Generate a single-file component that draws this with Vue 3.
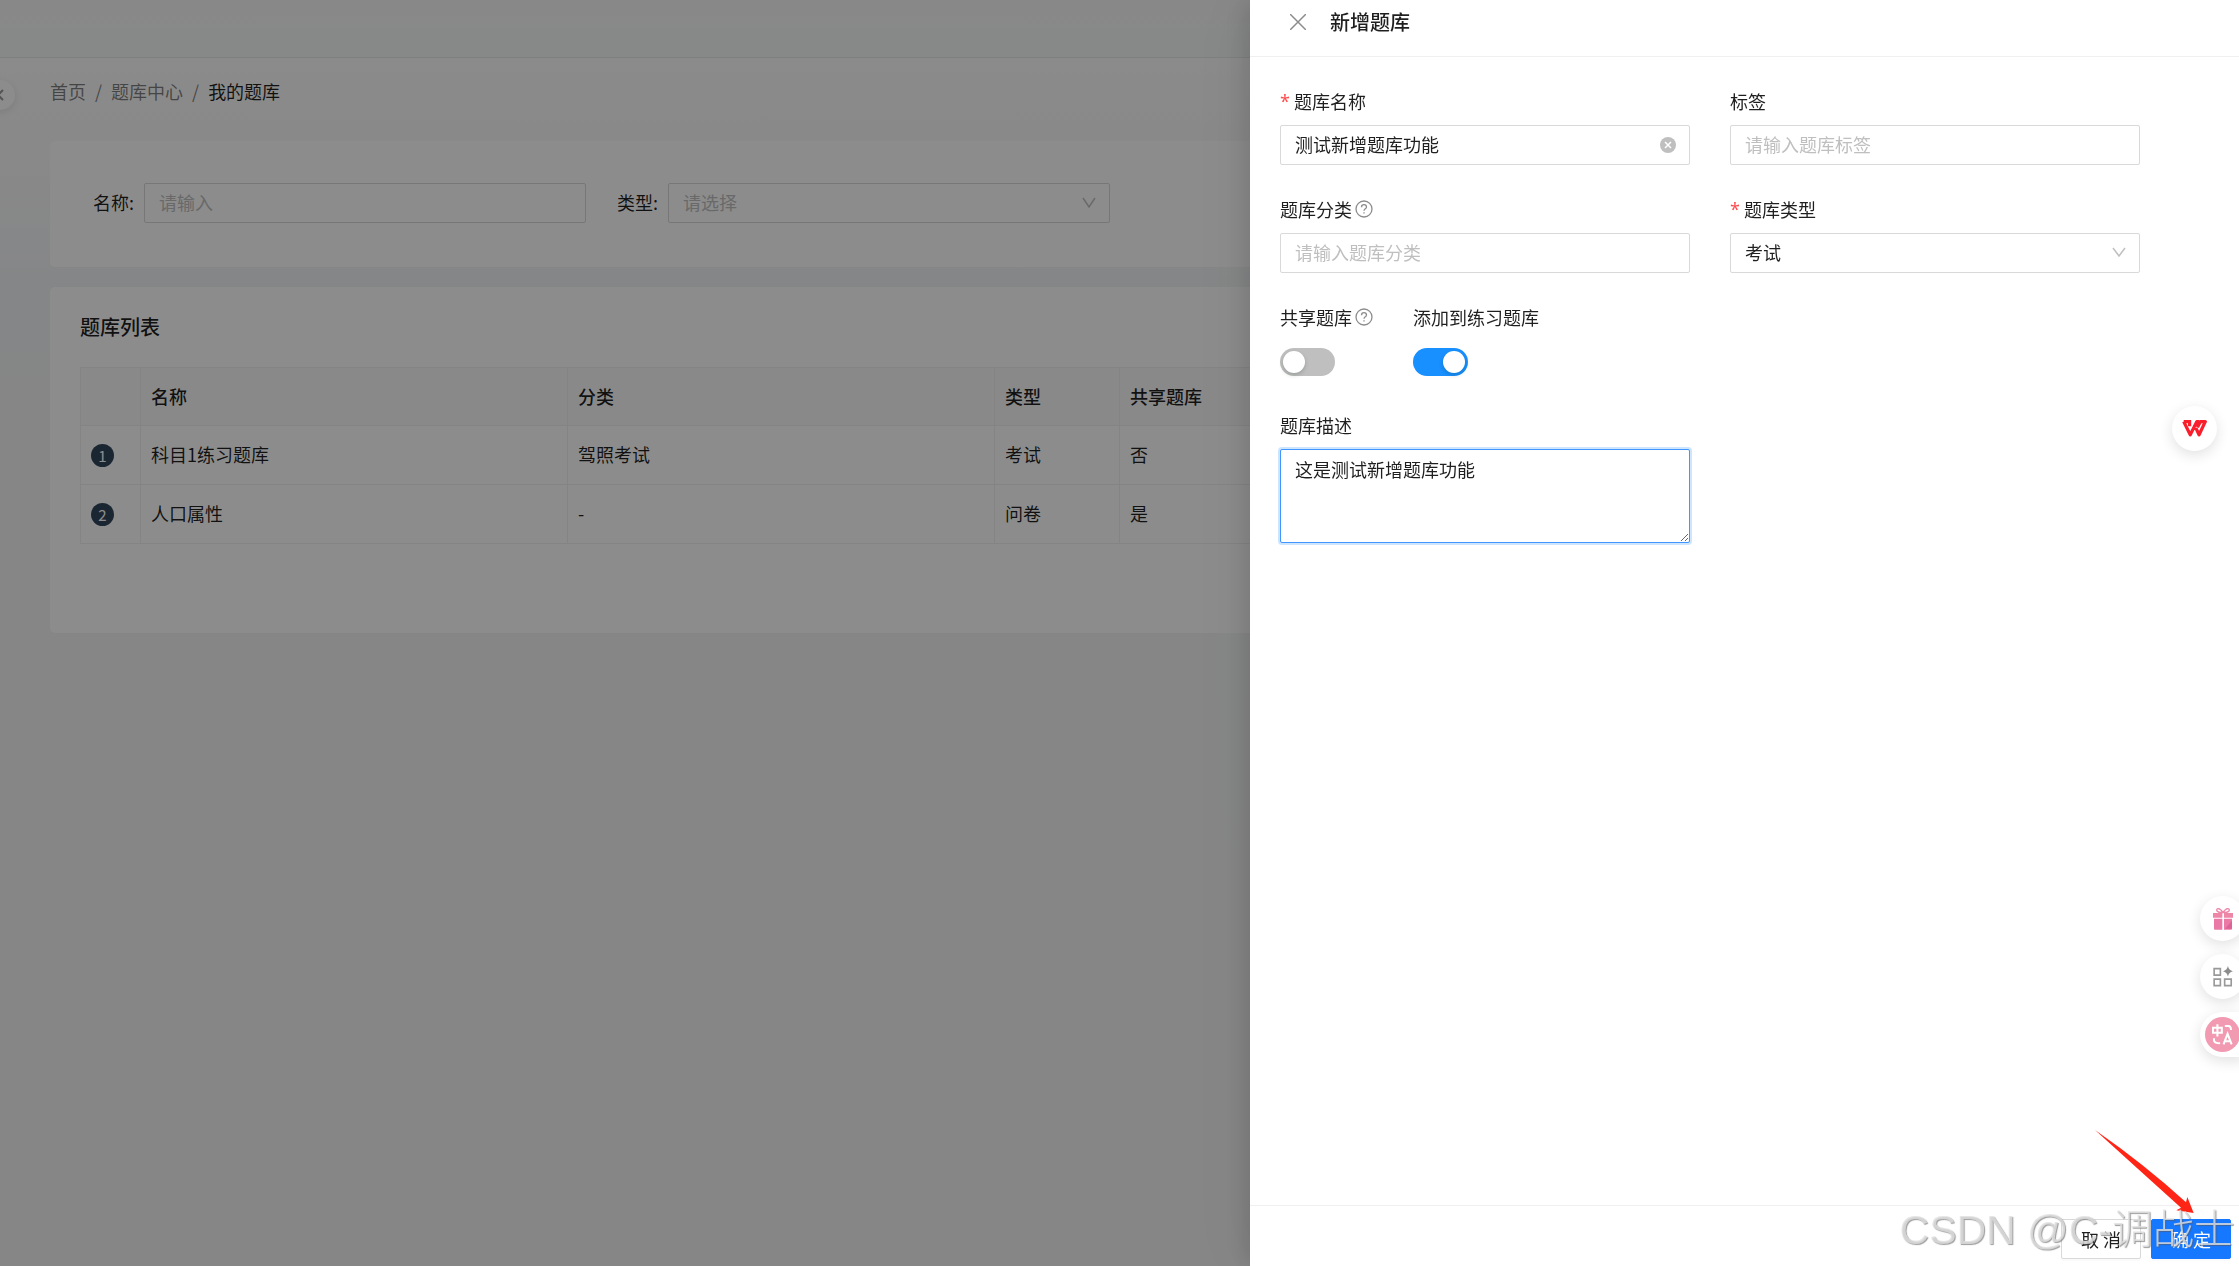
<script setup>
import { ref } from 'vue'

const filterName = ref('')
const filterType = ref('')
const bankName = ref('测试新增题库功能')
const bankTag = ref('')
const bankCategory = ref('')
const bankType = ref('exam')
const shared = ref(false)
const practice = ref(true)
const description = ref('这是测试新增题库功能')

const rows = [
  { id: 1, name: '科目1练习题库', category: '驾照考试', type: '考试', shared: '否' },
  { id: 2, name: '人口属性', category: '-', type: '问卷', shared: '是' },
]
</script>

<template>
  <div class="app">
    <header class="topbar"></header>
    <button class="collapse" type="button" aria-label="收起">
      <svg viewBox="0 0 10 14" width="10" height="14"><path d="M8 2 3 7l5 5" /></svg>
    </button>

    <main class="page">
      <nav class="crumbs" aria-label="breadcrumb">
        <a href="#">首页</a><span class="sep">/</span>
        <a href="#">题库中心</a><span class="sep">/</span>
        <span class="current">我的题库</span>
      </nav>

      <form class="card filters" @submit.prevent>
        <div class="filter">
          <label for="f-name">名称:</label>
          <input id="f-name" v-model="filterName" class="control" type="text" placeholder="请输入" />
        </div>
        <div class="filter">
          <label for="f-type">类型:</label>
          <div class="select-wrap">
            <select id="f-type" v-model="filterType" class="control" :class="{ empty: !filterType }">
              <option value="">请选择</option>
              <option value="exam">考试</option>
              <option value="survey">问卷</option>
            </select>
            <svg class="caret" viewBox="0 0 14 14" width="14" height="14"><path d="M1 2l6 9 6-9" /></svg>
          </div>
        </div>
      </form>

      <section class="card list">
        <h2>题库列表</h2>
        <table>
          <colgroup>
            <col class="c-index" /><col class="c-wide" /><col class="c-wide" /><col class="c-type" /><col />
          </colgroup>
          <thead>
            <tr><th></th><th>名称</th><th>分类</th><th>类型</th><th>共享题库</th></tr>
          </thead>
          <tbody>
            <tr v-for="row in rows" :key="row.id">
              <td><span class="index">{{ row.id }}</span></td>
              <td>{{ row.name }}</td>
              <td>{{ row.category }}</td>
              <td>{{ row.type }}</td>
              <td>{{ row.shared }}</td>
            </tr>
          </tbody>
        </table>
      </section>
    </main>

    <div class="mask"></div>

    <aside class="drawer" role="dialog" aria-labelledby="drawer-title">
      <header class="drawer-head">
        <button class="close" type="button" aria-label="关闭">
          <svg viewBox="0 0 16 16" width="16" height="16"><path d="M0 0l16 16M16 0 0 16" /></svg>
        </button>
        <h1 id="drawer-title">新增题库</h1>
      </header>

      <form class="drawer-body" @submit.prevent>
        <div class="form-row">
          <div class="field">
            <label for="b-name"><span class="star">*</span>题库名称</label>
            <div class="select-wrap">
              <input id="b-name" v-model="bankName" class="control" type="text" />
              <button class="clear" type="button" aria-label="清除" @click="bankName = ''">
                <svg viewBox="0 0 16 16" width="16" height="16">
                  <circle cx="8" cy="8" r="8" />
                  <path d="M5 5l6 6M11 5l-6 6" />
                </svg>
              </button>
            </div>
          </div>
          <div class="field">
            <label for="b-tag">标签</label>
            <input id="b-tag" v-model="bankTag" class="control" type="text" placeholder="请输入题库标签" />
          </div>
        </div>

        <div class="form-row">
          <div class="field">
            <label for="b-cat">题库分类
              <svg class="help" viewBox="0 0 18 18" width="18" height="18">
                <circle cx="9" cy="9" r="8" />
                <path d="M6.5 7.2c0-3.4 5-3.2 5-.2 0 1.900-2.500 1.800-2.500 3.800M9 12.200v1.400" />
              </svg>
            </label>
            <input id="b-cat" v-model="bankCategory" class="control" type="text" placeholder="请输入题库分类" />
          </div>
          <div class="field">
            <label for="b-type"><span class="star">*</span>题库类型</label>
            <div class="select-wrap">
              <select id="b-type" v-model="bankType" class="control">
                <option value="exam">考试</option>
                <option value="survey">问卷</option>
              </select>
              <svg class="caret" viewBox="0 0 14 14" width="14" height="14"><path d="M1 2l6 8 6-8" /></svg>
            </div>
          </div>
        </div>

        <div class="form-row">
          <div class="field auto">
            <label for="b-share">共享题库
              <svg class="help" viewBox="0 0 18 18" width="18" height="18">
                <circle cx="9" cy="9" r="8" />
                <path d="M6.5 7.2c0-3.4 5-3.2 5-.2 0 1.900-2.500 1.800-2.500 3.800M9 12.200v1.400" />
              </svg>
            </label>
            <div class="switch-row"><input id="b-share" v-model="shared" class="switch" type="checkbox" role="switch" /></div>
          </div>
          <div class="field auto">
            <label for="b-practice">添加到练习题库</label>
            <div class="switch-row"><input id="b-practice" v-model="practice" class="switch" type="checkbox" role="switch" /></div>
          </div>
        </div>

        <div class="form-row">
          <div class="field">
            <label for="b-desc">题库描述</label>
            <textarea id="b-desc" v-model="description" class="control area"></textarea>
          </div>
        </div>
      </form>

      <footer class="drawer-foot">
        <button class="btn" type="button">取 消</button>
        <button class="btn primary" type="button">确 定</button>
      </footer>

      <svg class="arrow" viewBox="0 0 300 252" width="100" height="84">
        <path d="M0 0Q150 104 273 217L277 201 296 249 244 241 258 233Q130 118 0 0Z" />
      </svg>
      <div class="watermark">CSDN @C-调战士</div>
    </aside>

    <button class="float wps" type="button" aria-label="WPS">
      <svg viewBox="0 0 76 52" width="25" height="17">
        <path d="M5 5H28M5 5L25 45 45 5H52M42 24L52 45 71 5H56L47 22M28 14H18" fill="none" stroke="#fa1e2d" stroke-width="10" stroke-linejoin="round" />
      </svg>
    </button>

    <div class="dock">
      <button class="float" type="button" aria-label="礼物">
        <svg viewBox="0 0 60 66" width="20" height="22">
          <path d="M3 32H28V65H6Q3 65 3 62ZM33 32H57V62Q57 65 54 65H33Z" fill="#ea7aa5" />
          <path d="M0 15H28V29H0ZM33 15H60V29H33Z" fill="#ee86a8" />
          <path d="M30 14C20-2 8 0 12 9q4 5 18 5C40-2 52 0 48 9q-4 5-18 5" fill="none" stroke="#ee86a8" stroke-width="4" />
          <path d="M36 62 57 38V62Z" fill="#dd6298" />
        </svg>
      </button>
      <button class="float" type="button" aria-label="应用">
        <svg viewBox="0 0 60 64" width="20" height="21">
          <path d="M3 8H22V28H3ZM3 40H22V60H3ZM35 40H55V60H35Z" fill="none" stroke="#999" stroke-width="5" />
          <path d="M45 0q3 13 15 16-12 3-15 16-3-13-15-16 12-3 15-16Z" fill="#8c8c8c" />
        </svg>
      </button>
      <button class="float translate" type="button" aria-label="翻译">
        <span class="disc">
          <svg viewBox="0 0 62 62" width="21" height="21">
            <path d="M3 11H29V26H3ZM16 1V37M38 6H48Q56 6 56 18M6 42V48Q6 57 24 57M34 60L46 29 58 60M38 51H54" fill="none" stroke="#fff" stroke-width="6" />
          </svg>
        </span>
      </button>
    </div>
  </div>
</template>

<style>
body {
  margin: 0;
  overflow: hidden;
}
</style>

<style scoped>
.app {
  position: relative;
  min-height: 100vh;
  overflow: hidden;
  background: linear-gradient(#fdfdfd 60px, #fafafa 130px, #f3f5f6 280px, #f4f5f5 500px, #f5f5f5 100%);
  color: rgba(0, 0, 0, 0.88);
  font: 18px/28px "Noto Sans CJK SC", "Noto Sans", sans-serif;
}
.app *, .app *::before { box-sizing: border-box; }
button, input, select, textarea { font: inherit; color: inherit; margin: 0; }
button { padding: 0; border: 0; background: none; cursor: pointer; }
svg { display: block; }

.topbar {
  height: 58px;
  background: linear-gradient(#f8f8f9, #f5f9f7);
  border-bottom: 1px solid #e4eae7;
}
.collapse {
  position: absolute;
  top: 80px;
  left: -15px;
  width: 30px;
  height: 30px;
  padding-left: 10px;
  border-radius: 50%;
  background: #fff;
  box-shadow: 0 2px 8px rgba(0, 0, 0, 0.1);
}
.collapse path { fill: none; stroke: #999; stroke-width: 2; }

.page { padding: 19px 50px 0; }
.crumbs { display: flex; height: 28px; color: rgba(0, 0, 0, 0.5); }
.crumbs a { color: inherit; text-decoration: none; }
.crumbs .sep { margin: 0 9px; }
.crumbs .current { color: rgba(0, 0, 0, 0.88); }

.card { background: #fff; border-radius: 5px; }
.filters {
  display: grid;
  grid-template-columns: repeat(4, 1fr);
  gap: 31px;
  margin-top: 36px;
  padding: 42px 31px 44px 43px;
}
.filter { display: flex; align-items: center; }
.filter label { width: 51px; flex: none; padding-bottom: 2px; white-space: nowrap; }

.control {
  display: block;
  width: 100%;
  height: 40px;
  padding: 0 14px 2px;
  border: 1px solid #d9d9d9;
  border-radius: 2px;
  background: #fff;
  outline: none;
}
.filter .control { min-width: 0; }
.filter > .control { flex: 1; }
.control::placeholder { color: #bfbfbf; opacity: 1; }
select.control { appearance: none; }
.empty { color: #bfbfbf; }
.select-wrap { position: relative; flex: 1; }
.caret { position: absolute; top: 13px; right: 14px; pointer-events: none; }
.caret path { fill: none; stroke: #bfbfbf; stroke-width: 1.5; }

.list { margin-top: 20px; padding: 26px 30px 89px; }
.list h2 { margin: 0 0 26px; font-size: 20px; line-height: 28px; font-weight: 500; }
table { width: 100%; table-layout: fixed; border-collapse: collapse; }
.c-index { width: 60px; }
.c-wide { width: 427px; }
.c-type { width: 125px; }
th, td { height: 58px; padding: 0 10px 2px; border: 1px solid #f0f0f0; text-align: left; font-weight: 400; }
td { height: 59px; }
td:first-child { padding-bottom: 0; }
th { background: #fafafa; font-weight: 500; }
.index {
  display: block;
  width: 23px;
  height: 23px;
  border-radius: 50%;
  background: #314659;
  color: #fff;
  font-size: 15px;
  line-height: 23px;
  text-align: center;
}

.mask { position: fixed; inset: 0; background: rgba(0, 0, 0, 0.45); }

.drawer {
  position: fixed;
  top: 0;
  right: 0;
  bottom: 0;
  display: flex;
  flex-direction: column;
  width: 989px;
  max-width: 100%;
  background: #fff;
  box-shadow: -8px 0 20px rgba(0, 0, 0, 0.1), -12px 0 60px rgba(0, 0, 0, 0.06);
}
.drawer-head {
  display: flex;
  align-items: center;
  gap: 24px;
  height: 57px;
  padding: 0 40px 12px;
  border-bottom: 1px solid #f0f0f0;
}
.drawer-head h1 { margin: 0; font-size: 20px; line-height: 28px; font-weight: 500; }
.close path { stroke: #8c8c8c; stroke-width: 1.5; }

.drawer-body { flex: 1; padding: 30px; }
.form-row { display: flex; gap: 40px; margin-bottom: 30px; }
.field { width: 410px; }
.field.auto { width: auto; }
.field label { display: flex; align-items: center; height: 28px; margin-bottom: 10px; }
.star { margin-right: 4px; color: #ff4d4f; font-family: "Noto Sans", sans-serif; }
.help { margin-left: 3px; }
.help circle, .help path { fill: none; stroke: #8c8c8c; stroke-width: 1.3; }
.clear { position: absolute; top: 12px; right: 14px; }
.clear circle { fill: #bfbfbf; }
.clear path { stroke: #fff; stroke-width: 1.5; }
.area {
  height: 94px;
  padding: 5px 14px;
  border-color: #4096ff;
  box-shadow: 0 0 0 2px rgba(5, 125, 255, 0.2);
  resize: vertical;
}
.switch-row { display: flex; align-items: flex-end; height: 40px; padding-bottom: 5px; }
.switch {
  appearance: none;
  width: 55px;
  height: 28px;
  padding: 3px;
  border-radius: 14px;
  background: #bfbfbf;
  cursor: pointer;
}
.switch::before {
  content: "";
  display: block;
  width: 22px;
  height: 22px;
  border-radius: 50%;
  background: #fff;
  box-shadow: 0 2px 4px rgba(0, 35, 11, 0.2);
}
.switch:checked { background: #1890ff; }
.switch:checked::before { margin-left: auto; }

.drawer-foot {
  display: flex;
  justify-content: flex-end;
  gap: 10px;
  height: 61px;
  padding: 13px 8px 0;
  border-top: 1px solid #f0f0f0;
}
.btn {
  width: 80px;
  height: 40px;
  border: 1px solid #d9d9d9;
  border-radius: 2px;
  background: #fff;
  box-shadow: 0 2px 0 rgba(0, 0, 0, 0.02);
}
.primary { border-color: #1677ff; background: #1677ff; color: #fff; }

.arrow { position: absolute; right: 44px; bottom: 52px; pointer-events: none; }
.arrow path { fill: #ff2516; }
.watermark {
  position: absolute;
  right: 4px;
  bottom: 8px;
  color: rgba(225, 225, 225, 0.8);
  font: 300 41px/56px "Liberation Sans", "Noto Sans CJK SC", sans-serif;
  text-shadow: 1px 1px 1px rgba(90, 90, 90, 0.6);
  white-space: nowrap;
  pointer-events: none;
}

.float {
  display: flex;
  align-items: center;
  justify-content: center;
  width: 45px;
  height: 45px;
  border-radius: 50%;
  background: #fff;
  box-shadow: 0 4px 14px rgba(0, 0, 0, 0.12);
}
.wps { position: fixed; top: 406px; right: 22px; }
.dock {
  position: fixed;
  top: 896px;
  right: -6px;
  display: flex;
  flex-direction: column;
  gap: 13px;
}
.translate { border-radius: 23px 0 0 23px; }
.disc {
  display: flex;
  align-items: center;
  justify-content: center;
  width: 35px;
  height: 35px;
  border-radius: 50%;
  background: #f29ab1;
}
</style>
